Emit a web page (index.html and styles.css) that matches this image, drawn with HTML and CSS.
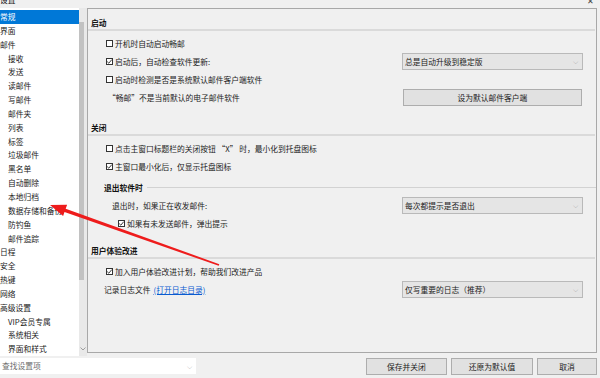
FILE: index.html
```html
<!DOCTYPE html>
<html lang="zh-CN">
<head>
  <meta charset="UTF-8">
  <title>设置</title>
  <link rel="stylesheet" href="styles.css">
</head>
<body>
  <div class="titlebar">
    <span class="title">设置</span>
    <span class="close">✕</span>
  </div>

  <div class="window">
    <div class="sidebar">
      <ul class="nav">
        <li class="active">常规</li>
        <li>界面</li>
        <li>邮件</li>
        <li class="sub">接收</li>
        <li class="sub">发送</li>
        <li class="sub">读邮件</li>
        <li class="sub">写邮件</li>
        <li class="sub">邮件夹</li>
        <li class="sub">列表</li>
        <li class="sub">标签</li>
        <li class="sub">垃圾邮件</li>
        <li class="sub">黑名单</li>
        <li class="sub">自动删除</li>
        <li class="sub">本地归档</li>
        <li class="sub">数据存储和备份</li>
        <li class="sub">防钓鱼</li>
        <li class="sub">邮件追踪</li>
        <li>日程</li>
        <li>安全</li>
        <li>热键</li>
        <li>网络</li>
        <li>高级设置</li>
        <li class="sub">VIP会员专属</li>
        <li class="sub">系统相关</li>
        <li class="sub">界面和样式</li>
      </ul>
      <div class="scrollbar">
        <div class="thumb"></div>
        <svg class="scroll-down" width="6" height="4" viewBox="0 0 6 4"><polyline points="0.5,0.5 3,3 5.5,0.5" fill="none" stroke="#8a8a8a" stroke-width="0.8"/></svg>
      </div>
    </div>

    <div class="panel">
      <div class="section">
        <div class="section-title">启动</div>
        <div class="row first">
          <span class="check"></span>开机时自动启动畅邮
        </div>
        <div class="row">
          <span class="check checked"><svg viewBox="0 0 7 7"><polyline points="1.2,3.6 2.8,5.2 5.8,1.6" fill="none" stroke="#222" stroke-width="0.9"/></svg></span>启动后，自动检查软件更新:
          <div class="select">总是自动升级到稳定版<span class="arrow">⌵</span></div>
        </div>
        <div class="row">
          <span class="check"></span>启动时检测是否是系统默认邮件客户端软件
        </div>
        <div class="row note">
          “畅邮”不是当前默认的电子邮件软件
          <div class="btn wide">设为默认邮件客户端</div>
        </div>
      </div>

      <div class="section">
        <div class="section-title">关闭</div>
        <div class="row first">
          <span class="check"></span>点击主窗口标题栏的关闭按钮 “X” 时，最小化到托盘图标
        </div>
        <div class="row">
          <span class="check checked"><svg viewBox="0 0 7 7"><polyline points="1.2,3.6 2.8,5.2 5.8,1.6" fill="none" stroke="#222" stroke-width="0.9"/></svg></span>主窗口最小化后，仅显示托盘图标
        </div>
        <div class="row subhead">
          <span>退出软件时</span><span class="rule"></span>
        </div>
        <div class="row indent">
          退出时，如果正在收发邮件:
          <div class="select">每次都提示是否退出<span class="arrow">⌵</span></div>
        </div>
        <div class="row indent2">
          <span class="check checked"><svg viewBox="0 0 7 7"><polyline points="1.2,3.6 2.8,5.2 5.8,1.6" fill="none" stroke="#222" stroke-width="0.9"/></svg></span>如果有未发送邮件，弹出提示
        </div>
      </div>

      <div class="section last">
        <div class="section-title">用户体验改进</div>
        <div class="row first">
          <span class="check checked"><svg viewBox="0 0 7 7"><polyline points="1.2,3.6 2.8,5.2 5.8,1.6" fill="none" stroke="#222" stroke-width="0.9"/></svg></span>加入用户体验改进计划，帮助我们改进产品
        </div>
        <div class="row log">
          记录日志文件 <a class="link" href="#">(打开日志目录)</a>
          <div class="select">仅写重要的日志（推荐）<span class="arrow">⌵</span></div>
        </div>
      </div>
    </div>
  </div>

  <div class="footer">
    <div class="search">查找设置项<span class="arrow">⌵</span></div>
    <div class="spacer"></div>
    <div class="btn save">保存并关闭</div>
    <div class="btn reset">还原为默认值</div>
    <div class="btn cancel">取消</div>
  </div>

  <svg class="annotation" width="600" height="378" viewBox="0 0 600 378">
    <polygon points="50,205 67.1,204.7 65.7,208.7 219.3,264.2 218.7,265.8 64.5,212.1 63.1,216" fill="#ee1c1c"/>
  </svg>
</body>
</html>
```

FILE: styles.css
```css
* {
  margin: 0;
  padding: 0;
  box-sizing: border-box;
}

body {
  width: 600px;
  height: 378px;
  overflow: hidden;
  position: relative;
  background-color: #f0f0f0;
  color: #222;
  font-family: "Noto Sans CJK SC", "Noto Sans", sans-serif;
  font-size: 7.75px;
}

.titlebar {
  height: 8px;
  overflow: hidden;
  display: flex;
  justify-content: space-between;
}

.title {
  line-height: 8px;
  margin-top: -4px;
  color: #111;
}

.close {
  line-height: 8px;
  margin-top: -3px;
  margin-right: 6px;
  color: #444;
}

.window {
  display: flex;
  align-items: flex-start;
  height: 348px;
}

/* left navigation */
.sidebar {
  width: 87px;
  height: 348px;
  display: flex;
  background-color: #fff;
}

.nav {
  width: 79px;
  list-style: none;
  padding-top: 2px;
  overflow: hidden;
}

.nav li {
  line-height: 13.85px;
  white-space: nowrap;
  color: #1a1a1a;
}

.nav li.sub {
  padding-left: 8px;
}

.nav li.active {
  background-color: #0078d7;
  color: #fff;
}

.scrollbar {
  width: 8px;
  background-color: #e9e9e9;
  display: flex;
  flex-direction: column;
}

.thumb {
  width: 5px;
  height: 258px;
  margin-top: 14px;
  background-color: #c2c2c2;
}

.scroll-down {
  margin-top: auto;
  margin-bottom: 5px;
  margin-left: 1px;
}

/* settings panel */
.panel {
  flex: 1;
  height: 345px;
  margin-right: 3px;
  border: 1px solid #a8a8a8;
}

.section + .section {
  margin-top: 8px;
}

.section.last {
  margin-top: 5px;
}

.section-title {
  padding: 7px 0 0 3px;
  line-height: 13px;
  font-weight: bold;
  color: #111;
  border-bottom: 2px solid #dadada;
  margin-right: 1px;
}

.row {
  height: 18px;
  display: flex;
  align-items: center;
  padding-left: 18px;
  white-space: nowrap;
}

.row.first {
  margin-top: 3px;
}

.row.note {
  padding-left: 20px;
}

.row.subhead {
  margin-top: 3px;
  padding-left: 16px;
  font-weight: bold;
  color: #111;
}

.rule {
  flex: 1;
  height: 1px;
  margin-left: 4px;
  background-color: #d2d2d2;
}

.row.indent {
  padding-left: 24px;
}

.row.indent2 {
  padding-left: 30px;
}

.row.log {
  padding-left: 16px;
}

.check {
  width: 7px;
  height: 7px;
  margin-right: 2px;
  border: 1px solid #333;
  background-color: #fff;
  display: inline-flex;
}

.check svg {
  width: 7px;
  height: 7px;
  margin: -1px;
}

.link {
  margin-left: 3px;
  color: #0a5bd0;
  text-decoration: underline;
}

.select {
  margin-left: auto;
  margin-right: 13px;
  width: 181px;
  height: 17px;
  line-height: 15px;
  padding-left: 2px;
  background-color: #e5e5e5;
  border: 1px solid #b9b9b9;
  display: flex;
  justify-content: space-between;
}

.arrow {
  color: #777;
  font-size: 7px;
  margin-right: 4px;
}

.btn {
  height: 17px;
  line-height: 15px;
  text-align: center;
  background-color: #e1e1e1;
  border: 1px solid #adadad;
  color: #1a1a1a;
}

.btn.wide {
  margin-left: auto;
  margin-right: 14px;
  width: 179px;
}

/* bottom bar */
.footer {
  display: flex;
  padding-top: 2px;
  height: 22px;
}

.search {
  width: 196px;
  height: 16px;
  line-height: 16px;
  padding-left: 2px;
  background-color: #fff;
  color: #6d6d6d;
  display: flex;
  justify-content: space-between;
}

.spacer {
  flex: 1;
}

.btn.save {
  width: 81px;
}

.btn.reset {
  width: 82px;
  margin-left: 4px;
}

.btn.cancel {
  width: 60px;
  margin-left: 4px;
  margin-right: 3px;
}

.annotation {
  position: absolute;
  top: 0;
  left: 0;
  pointer-events: none;
}
```
